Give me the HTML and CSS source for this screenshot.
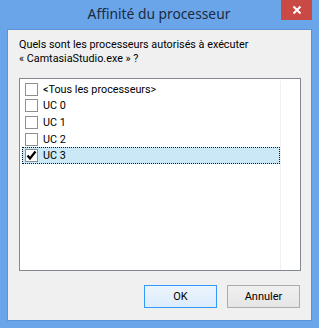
FILE: index.html
```html
<!DOCTYPE html>
<html lang="fr">
<head>
<meta charset="utf-8">
<link rel="stylesheet" href="styles.css">
</head>
<body>
<div class="window">
  <div class="titlebar">
    <div class="title">Affinité du processeur</div>
    <div class="close">
      <svg width="10" height="10" viewBox="0 0 10 10"><path d="M1.5 1.5 L8.5 8.5 M8.5 1.5 L1.5 8.5" stroke="#fff" stroke-width="2" fill="none"/></svg>
    </div>
  </div>
  <div class="client">
    <p class="label">Quels sont les processeurs autorisés à exécuter<br>« CamtasiaStudio.exe » ?</p>
    <div class="listbox">
      <div class="items">
        <div class="row"><span class="box"></span><span>&lt;Tous les processeurs&gt;</span></div>
        <div class="row"><span class="box"></span><span>UC 0</span></div>
        <div class="row"><span class="box"></span><span>UC 1</span></div>
        <div class="row"><span class="box"></span><span>UC 2</span></div>
        <div class="row selected"><span class="box"><svg width="11" height="11" viewBox="0 0 11 11"><path d="M1.5 5.5 L4 8.5 L9.5 1.5" stroke="#000" stroke-width="2.2" fill="none"/></svg></span><span>UC 3</span></div>
      </div>
    </div>
    <div class="buttons">
      <button class="btn default">OK</button>
      <button class="btn">Annuler</button>
    </div>
  </div>
</div>
</body>
</html>
```
FILE: styles.css
```css
html, body {
  margin: 0;
  padding: 0;
}
body {
  width: 319px;
  height: 328px;
  overflow: hidden;
  font-family: "Roboto", "Noto Sans", sans-serif;
  font-size: 10.8px;
  color: #000;
}
.window {
  width: 319px;
  height: 328px;
  box-sizing: border-box;
  background: #6aa5ea;
  display: flex;
  flex-direction: column;
  padding: 0 7px 7px 7px;
}
.titlebar {
  height: 29px;
  display: flex;
  align-items: flex-start;
  justify-content: center;
  position: relative;
}
.title {
  font-family: "Noto Sans", sans-serif;
  font-size: 13.8px;
  color: #1b2a3e;
  margin-top: 4px;
  margin-right: 1px;
}
.close {
  position: absolute;
  right: 0;
  top: 0;
  width: 31px;
  height: 20px;
  background: #c94a44;
  display: flex;
  align-items: center;
  justify-content: center;
}
.client {
  flex: 1;
  background: #f0f0f0;
  border: 1px solid #5a93d8;
  display: flex;
  flex-direction: column;
  padding: 0 10px 12px 11px;
}
.label {
  margin: 8px 0 0 0;
  line-height: 13.5px;
  font-size: 10.8px;
}
.listbox {
  margin-top: 13px;
  height: 193px;
  box-sizing: border-box;
  border: 1px solid #828790;
  background: #fff;
  padding: 2px 19px 0 2px;
  display: flex;
}
.items {
  flex: 1;
  border-right: 1px solid #f0f0f0;
}
.row {
  height: 16.6px;
  display: flex;
  align-items: center;
  box-sizing: border-box;
  border: 1px solid transparent;
  padding-left: 2px;
  font-size: 10.8px;
}
.row.selected {
  background: #cbe8f6;
  border: 1px dotted #1a1a1a;
}
.box {
  width: 13px;
  height: 13px;
  box-sizing: border-box;
  border: 1px solid #8e8f8f;
  background: #fff;
  margin-right: 5px;
  display: flex;
  align-items: center;
  justify-content: center;
}
.buttons {
  margin-top: auto;
  display: flex;
  justify-content: flex-end;
  gap: 10px;
  padding-right: 1px;
}
.btn {
  width: 73px;
  height: 23px;
  font-family: inherit;
  font-size: 11px;
  border: 1px solid #acacac;
  background: linear-gradient(#f0f0f0, #e5e5e5);
  color: #000;
  padding: 0;
}
.btn.default {
  border-color: #3399ff;
  background: linear-gradient(#ecf4fc, #dcecfc);
}
```
